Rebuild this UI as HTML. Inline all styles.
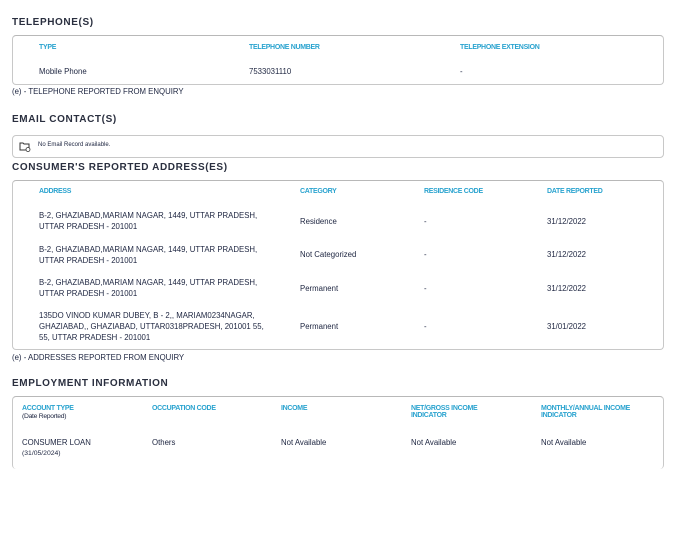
<html><head><style>
body{margin:0;width:677px;height:540px;background:#fff;font-family:"Liberation Sans",sans-serif;color:#1d2540;position:relative;overflow:hidden}
.a{position:absolute;white-space:nowrap}
.t{font-size:10px;font-weight:bold;letter-spacing:.6px;color:#2a2f3f}
.h{font-size:7px;font-weight:bold;color:#2aa3cf;letter-spacing:-.3px;line-height:7px}
.v{font-size:7.8px;line-height:11px}
.f{font-size:7.8px}
.box{position:absolute;border:1px solid #c8c8c8;border-radius:4px;border-top:1.5px solid #b8b8b8}
</style></head><body>
<div class="a t" style="left:12px;top:17px">TELEPHONE(S)</div>
<div class="box" style="left:12px;top:35px;width:650px;height:48px"></div>
<div class="a h" style="left:39px;top:44px">TYPE</div>
<div class="a h" style="left:249px;top:44px">TELEPHONE NUMBER</div>
<div class="a h" style="left:460px;top:44px">TELEPHONE EXTENSION</div>
<div class="a v" style="left:39px;top:66px">Mobile Phone</div>
<div class="a v" style="left:249px;top:66px">7533031110</div>
<div class="a v" style="left:460px;top:66px">-</div>
<div class="a f" style="left:12px;top:87px">(e) - TELEPHONE REPORTED FROM ENQUIRY</div>

<div class="a t" style="left:12px;top:114px">EMAIL CONTACT(S)</div>
<div class="box" style="left:12px;top:135px;width:650px;height:21px;border-top:1px solid #c8c8c8"></div>
<svg class="a" style="left:19px;top:141px" width="12" height="11" viewBox="0 0 12 11"><path d="M1 2h3l1 1h5v6H1z" fill="none" stroke="#333" stroke-width="1"/><circle cx="9" cy="8.5" r="2" fill="#fff" stroke="#333" stroke-width=".8"/></svg>
<div class="a" style="left:38px;top:142px;font-size:6px">No Email Record available.</div>

<div class="a t" style="left:12px;top:162px">CONSUMER'S REPORTED ADDRESS(ES)</div>
<div class="box" style="left:12px;top:180px;width:650px;height:168px"></div>
<div class="a h" style="left:39px;top:188px">ADDRESS</div>
<div class="a h" style="left:300px;top:188px">CATEGORY</div>
<div class="a h" style="left:424px;top:188px">RESIDENCE CODE</div>
<div class="a h" style="left:547px;top:188px">DATE REPORTED</div>

<div class="a v" style="left:39px;top:210px">B-2, GHAZIABAD,MARIAM NAGAR, 1449, UTTAR PRADESH,<br>UTTAR PRADESH - 201001</div>
<div class="a v" style="left:300px;top:216px">Residence</div><div class="a v" style="left:424px;top:216px">-</div><div class="a v" style="left:547px;top:216px">31/12/2022</div>
<div class="a v" style="left:39px;top:244px">B-2, GHAZIABAD,MARIAM NAGAR, 1449, UTTAR PRADESH,<br>UTTAR PRADESH - 201001</div>
<div class="a v" style="left:300px;top:249px">Not Categorized</div><div class="a v" style="left:424px;top:249px">-</div><div class="a v" style="left:547px;top:249px">31/12/2022</div>
<div class="a v" style="left:39px;top:277px">B-2, GHAZIABAD,MARIAM NAGAR, 1449, UTTAR PRADESH,<br>UTTAR PRADESH - 201001</div>
<div class="a v" style="left:300px;top:283px">Permanent</div><div class="a v" style="left:424px;top:283px">-</div><div class="a v" style="left:547px;top:283px">31/12/2022</div>
<div class="a v" style="left:39px;top:310px">135DO VINOD KUMAR DUBEY, B - 2,, MARIAM0234NAGAR,<br>GHAZIABAD,, GHAZIABAD, UTTAR0318PRADESH, 201001 55,<br>55, UTTAR PRADESH - 201001</div>
<div class="a v" style="left:300px;top:321px">Permanent</div><div class="a v" style="left:424px;top:321px">-</div><div class="a v" style="left:547px;top:321px">31/01/2022</div>
<div class="a f" style="left:12px;top:353px">(e) - ADDRESSES REPORTED FROM ENQUIRY</div>

<div class="a t" style="left:12px;top:378px">EMPLOYMENT INFORMATION</div>
<div class="box" style="left:12px;top:396px;width:650px;height:72px;border-bottom:none"></div>
<div class="a h" style="left:22px;top:405px">ACCOUNT TYPE<br><span style="color:#1d2540;font-weight:normal;font-size:6.8px;line-height:9px">(Date Reported)</span></div>
<div class="a h" style="left:152px;top:405px">OCCUPATION CODE</div>
<div class="a h" style="left:281px;top:405px">INCOME</div>
<div class="a h" style="left:411px;top:405px">NET/GROSS INCOME<br>INDICATOR</div>
<div class="a h" style="left:541px;top:405px">MONTHLY/ANNUAL INCOME<br>INDICATOR</div>
<div class="a v" style="left:22px;top:437px">CONSUMER LOAN</div>
<div class="a" style="left:22px;top:450px;font-size:6.8px">(31/05/2024)</div>
<div class="a v" style="left:152px;top:437px">Others</div>
<div class="a v" style="left:281px;top:437px">Not Available</div>
<div class="a v" style="left:411px;top:437px">Not Available</div>
<div class="a v" style="left:541px;top:437px">Not Available</div>
</body></html>
